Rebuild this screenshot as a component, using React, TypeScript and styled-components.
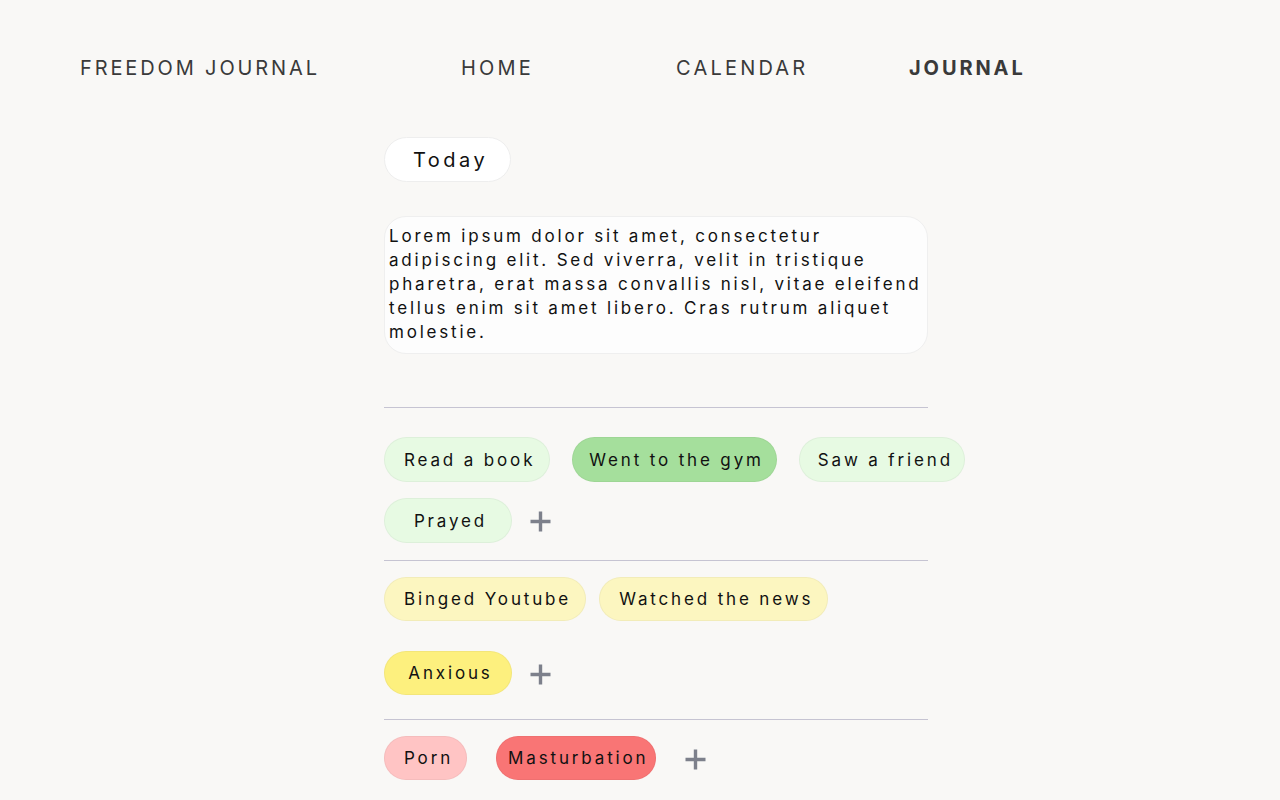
import React from "react";
import styled, { createGlobalStyle } from "styled-components";

const GlobalStyle = createGlobalStyle`
  body {
    margin: 0;
    background: #f9f8f6;
    font-family: Inter, "Noto Sans", sans-serif;
    color: #111;
  }
`;

type Tone = "mint" | "green" | "cream" | "yellow" | "pink" | "red";

const tones: Record<Tone, string> = {
  mint: "#e7fae3",
  green: "#a5df9c",
  cream: "#fcf6c0",
  yellow: "#fdf07e",
  pink: "#ffc4c4",
  red: "#f97575",
};

const App = () => {
  return (
    <Page>
      <GlobalStyle />
      <Nav>
        <Logo>FREEDOM JOURNAL</Logo>
        <NavLink $w={215}>HOME</NavLink>
        <NavLink $w={233}>CALENDAR</NavLink>
        <NavLink $w={228} $active>
          JOURNAL
        </NavLink>
      </Nav>

      <Main>
        <DateChip>Today</DateChip>
        <Entry>
          Lorem ipsum dolor sit amet, consectetur adipiscing elit. Sed viverra,
          velit in tristique pharetra, erat massa convallis nisl, vitae
          eleifend tellus enim sit amet libero. Cras rutrum aliquet molestie.
        </Entry>

        <Divider $top={53} />
        <Section $top={29}>
          <TagRow $gap={22}>
            <Tag $tone="mint">Read a book</Tag>
            <Tag $tone="green" $pad="0 12px 0 16px">
              Went to the gym
            </Tag>
            <Tag $tone="mint" $pad="0 11px 0 18px">
              Saw a friend
            </Tag>
          </TagRow>
          <TagRow $gap={18}>
            <Tag $tone="mint" $min={128}>
              Prayed
            </Tag>
            <AddButton />
          </TagRow>
        </Section>

        <Divider $top={17} />
        <Section $top={16} $gap={30}>
          <TagRow $gap={13}>
            <Tag $tone="cream" $h={44}>
              Binged Youtube
            </Tag>
            <Tag $tone="cream" $h={44}>
              Watched the news
            </Tag>
          </TagRow>
          <TagRow $gap={18}>
            <Tag $tone="yellow" $h={44} $min={128}>
              Anxious
            </Tag>
            <AddButton />
          </TagRow>
        </Section>

        <Divider $top={24} />
        <Section $top={16}>
          <TagRow $gap={29}>
            <Tag $tone="pink" $h={44} $pad="0 13px 0 19px">
              Porn
            </Tag>
            <Tag $tone="red" $h={44} $pad="0 7px 0 11px">
              Masturbation
            </Tag>
            <AddButton />
          </TagRow>
        </Section>
      </Main>
    </Page>
  );
};

const AddButton = () => (
  <Plus aria-label="add">
    <svg width="21" height="21" viewBox="0 0 21 21">
      <path d="M10.5 0.5v20M0.5 10.5h20" stroke="#7d808b" strokeWidth="3.4" />
    </svg>
  </Plus>
);

export default App;

const Page = styled.div`
  width: 1280px;
  min-height: 800px;
  overflow: hidden;
`;

const Nav = styled.nav`
  display: flex;
  align-items: flex-end;
  height: 68px;
  padding-left: 80px;
`;

const Logo = styled.div`
  width: 381px;
  flex-shrink: 0;
  font-size: 20px;
  letter-spacing: 2.87px;
  color: #3a3a3a;
  line-height: 12px;
  transform: translateY(6px);
`;

const NavLink = styled.a<{ $w: number; $active?: boolean }>`
  width: ${({ $w }) => $w}px;
  flex-shrink: 0;
  font-size: 20px;
  letter-spacing: ${({ $active }) => ($active ? "2.9px" : "3.2px")};
  font-weight: ${({ $active }) => ($active ? 700 : 400)};
  color: #3a3a3a;
  line-height: 12px;
  transform: translateY(6px);
  cursor: pointer;
`;

const Main = styled.main`
  width: 544px;
  margin-left: 384px;
  padding-top: 69px;
  display: flex;
  flex-direction: column;
  align-items: flex-start;
`;

const DateChip = styled.div`
  height: 45px;
  box-sizing: border-box;
  padding: 0 22px 0 28px;
  display: flex;
  align-items: center;
  border: 1px solid #eeeeee;
  border-radius: 23px;
  background: #ffffff;
  font-size: 20px;
  letter-spacing: 3.5px;
  color: #111;
`;

const Entry = styled.div`
  margin-top: 34px;
  width: 100%;
  box-sizing: border-box;
  padding: 7px 0 9px 4px;
  border: 1px solid #efefef;
  border-radius: 22px;
  background: #fdfdfd;
  font-size: 17px;
  line-height: 24px;
  letter-spacing: 2.8px;
  color: #111;
`;

const Divider = styled.hr<{ $top: number }>`
  width: 100%;
  margin: ${({ $top }) => $top}px 0 0;
  border: none;
  height: 1px;
  background: #c6c4d2;
`;

const Section = styled.section<{ $top: number; $gap?: number }>`
  margin-top: ${({ $top }) => $top}px;
  display: flex;
  flex-direction: column;
  gap: ${({ $gap }) => $gap ?? 16}px;
`;

const TagRow = styled.div<{ $gap: number }>`
  display: flex;
  align-items: center;
  gap: ${({ $gap }) => $gap}px;
`;

const Tag = styled.span<{ $tone: Tone; $pad?: string; $min?: number; $h?: number }>`
  height: ${({ $h }) => $h ?? 45}px;
  min-width: ${({ $min }) => $min ?? 0}px;
  box-sizing: border-box;
  padding: ${({ $pad }) => $pad ?? "0 14px 0 19px"};
  display: inline-flex;
  align-items: center;
  justify-content: center;
  border: 1px solid rgba(0, 0, 0, 0.04);
  border-radius: 23px;
  background: ${({ $tone }) => tones[$tone]};
  font-size: 17px;
  letter-spacing: 2.85px;
  color: #111;
  white-space: nowrap;
`;

const Plus = styled.button`
  display: flex;
  align-items: center;
  justify-content: center;
  padding: 0;
  margin-top: 2px;
  border: none;
  background: none;
  cursor: pointer;
`;
